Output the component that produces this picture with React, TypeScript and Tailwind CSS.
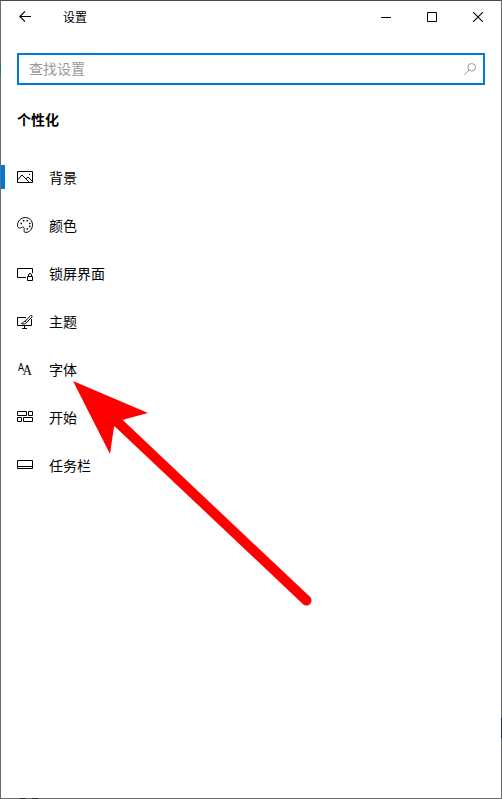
import type { ReactNode } from 'react';

const navItems: { label: string; icon: ReactNode; active?: boolean }[] = [
  {
    label: '背景',
    active: true,
    icon: (
      <>
        <path d="M.5 2.5h15v11H.5z" />
        <path d="M1 10.500l4-4.500 7 7M9 9.800L11 8l4 4" />
        <path d="M12 5.500h1" />
      </>
    ),
  },
  {
    label: '颜色',
    icon: (
      <>
        <path d="M8.300.6C12.500.6 15.500 3.600 15.500 7.800c0 4.300-3 7.600-6.600 7.600-1.600 0-2-.9-1.800-2 .2-1.400.3-2.800-.9-3.300-1.300-.5-2.100 1.200-3.600 1C1.100 10.900.5 9.700.5 8.300.5 4 4 .6 8.300.6z" />
        <path d="M3.500 6.500H5M5.800 3.700h1.500M9.500 3.700H11M12 6.500h1.500M12 9.500h1.500M9.500 12H11" strokeWidth="1.500" />
      </>
    ),
  },
  {
    label: '锁屏界面',
    icon: (
      <>
        <path d="M9 12.500H.5v-9h15V8" />
        <path d="M10.500 11.500h5v4h-5zM11.500 11.500V10a1.500 1.500 0 0 1 3 0v1.500" />
      </>
    ),
  },
  {
    label: '主题',
    icon: (
      <>
        <path d="M9 4.500H.5v8h14V6M7.500 12.500v3M5 15.500h5" />
        <path d="M13.800 2.500L8.200 8.200l1.300 1.300L15 4c.6-.9-.3-2-1.200-1.500zM8.200 8.200c-2-.3-1.600 1.900-3.700 2.200 1.500 1 4.500.8 5-.9" />
      </>
    ),
  },
  {
    label: '字体',
    icon: (
      <g fill="#000" stroke="none">
        <text x="1" y="10" fontSize="11" textLength="6" lengthAdjust="spacingAndGlyphs" className="font-['Liberation_Sans']">A</text>
        <text x="5.500" y="14" fontSize="14" textLength="9.500" lengthAdjust="spacingAndGlyphs" className="font-['Liberation_Serif']">A</text>
      </g>
    ),
  },
  {
    label: '开始',
    icon: <path d="M.5 2.500h9v4h-9zM11.500 2.500h4v4h-4zM.5 8.500h4v4h-4zM6.500 8.500h9v4h-9z" />,
  },
  {
    label: '任务栏',
    icon: <path d="M.5 3.500h15v8H.5zM.5 9.500h15" />,
  },
];

function TitleBar() {
  return (
    <header className="flex h-8 items-center">
      <svg className="ml-[18px] h-3 w-3" viewBox="0 0 12 12" fill="none" stroke="#000" strokeWidth="1.1">
        <path d="M12 5.500H.8M6 .3L.8 5.500 6 10.700" />
      </svg>
      <h1 className="ml-8 flex-1 text-xs">设置</h1>
      <div className="flex">
        <button className="flex h-8 w-[46px] items-center justify-center">
          <svg className="h-[10px] w-[10px]" viewBox="0 0 10 10" stroke="#000">
            <path d="M0 5.500h10" />
          </svg>
        </button>
        <button className="flex h-8 w-[46px] items-center justify-center">
          <svg className="h-[10px] w-[10px]" viewBox="0 0 10 10" fill="none" stroke="#000">
            <path d="M.5.500h9v9h-9z" />
          </svg>
        </button>
        <button className="flex h-8 w-[46px] items-center justify-center">
          <svg className="h-[10px] w-[10px]" viewBox="0 0 10 10" stroke="#000" strokeWidth="1.1">
            <path d="M0 0l10 10M10 0L0 10" />
          </svg>
        </button>
      </div>
    </header>
  );
}

export default function App() {
  return (
    <div className="relative h-[799px] w-[502px] border border-[#6b6b6b] border-t-[#47474b] bg-white font-['Noto_Sans_CJK_SC',sans-serif] text-black">
      <TitleBar />
      <div className="mx-4 mt-5 flex h-8 items-center border-2 border-[#0078d7] pr-[7px] pl-[10px]">
        <span className="mb-[3px] flex-1 text-sm leading-5 text-[#999]">查找设置</span>
        <svg className="h-3 w-3" viewBox="0 0 12 12" fill="none" stroke="#999">
          <circle cx="7.700" cy="4.300" r="3.800" />
          <path d="M5 7L.3 11.700" />
        </svg>
      </div>
      <h2 className="mt-6 ml-4 text-sm leading-5 font-bold">个性化</h2>
      <nav className="mt-6">
        {navItems.map((item) => (
          <a key={item.label} className="flex h-12 items-center">
            <span className={item.active ? 'h-6 w-1 bg-[#0078d7]' : 'h-6 w-1'} />
            <svg className="ml-3 h-4 w-4" viewBox="0 0 16 16" fill="none" stroke="#000">
              {item.icon}
            </svg>
            <span className="ml-4 text-sm leading-5">{item.label}</span>
          </a>
        ))}
      </nav>
      {/* bits of the desktop behind the window edge */}
      <span className="absolute top-[62px] -left-px h-3 w-px bg-[#1f7a68]" />
      <span className="absolute top-[717px] -right-px h-5 w-px bg-[#0c2a7c]" />
      <span className="absolute -bottom-px left-[19px] h-px w-[6px] bg-[#2b2b2b]" />
      <span className="absolute -bottom-px left-[31px] h-px w-[6px] bg-[#2b2b2b]" />
      {/* pointer arrow over the list */}
      <svg className="pointer-events-none absolute top-[379px] left-[71px] h-[228px] w-[242px]" viewBox="72 380 242 228">
        <path d="M118 422.500L306.500 600.500" stroke="#f00" strokeWidth="10" strokeLinecap="round" />
        <path d="M73 381L148 413L122 420L114 427L110 454z" fill="#f00" />
      </svg>
    </div>
  );
}
